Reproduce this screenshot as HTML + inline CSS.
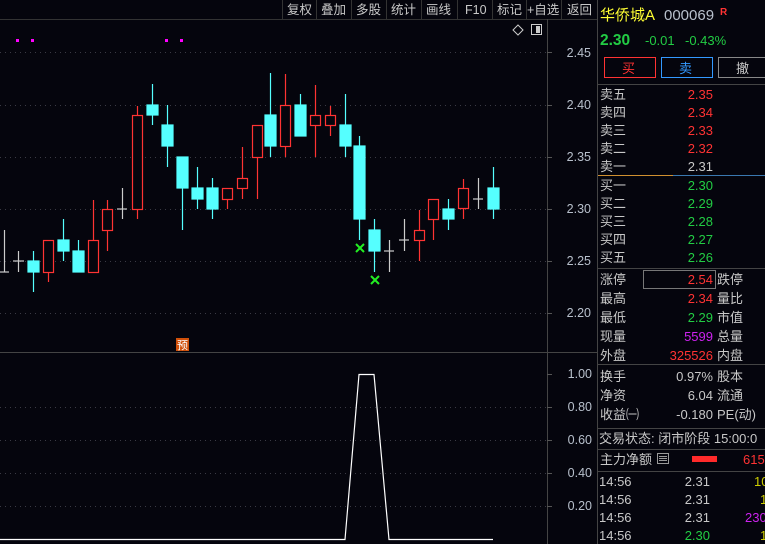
<!DOCTYPE html>
<html><head><meta charset="utf-8"><style>
html,body{margin:0;padding:0;background:#05050d;}
svg{display:block;font-family:"Liberation Sans","Noto Sans CJK SC",sans-serif;}
</style></head><body>
<svg width="765" height="544" viewBox="0 0 765 544" xmlns="http://www.w3.org/2000/svg">
<rect width="765" height="544" fill="#05050d"/>
<!-- toolbar -->
<g stroke="#333" stroke-width="1">
<line x1="282.5" y1="0" x2="282.5" y2="19"/><line x1="316.5" y1="0" x2="316.5" y2="19"/><line x1="351.5" y1="0" x2="351.5" y2="19"/><line x1="386.5" y1="0" x2="386.5" y2="19"/><line x1="421.5" y1="0" x2="421.5" y2="19"/><line x1="457.5" y1="0" x2="457.5" y2="19"/><line x1="492.5" y1="0" x2="492.5" y2="19"/><line x1="526.5" y1="0" x2="526.5" y2="19"/><line x1="561.5" y1="0" x2="561.5" y2="19"/>
<line x1="0" y1="19.5" x2="597" y2="19.5"/>
</g>
<g fill="#c8c8c8" font-size="12.5">
<text x="287" y="14">复权</text><text x="321" y="14">叠加</text><text x="356" y="14">多股</text><text x="391" y="14">统计</text><text x="426" y="14">画线</text><text x="465" y="14">F10</text><text x="497" y="14">标记</text><text x="527" y="14">+自选</text><text x="567" y="14">返回</text>
</g>
<path d="M518 25 L523 30 L518 35 L513 30 Z" fill="none" stroke="#ccc"/>
<rect x="531.5" y="24.5" width="10" height="10" fill="none" stroke="#ccc"/><rect x="536" y="26" width="4" height="7" fill="#ccc"/>
<!-- magenta dots -->
<g fill="#ff00ff"><rect x="16" y="39" width="3" height="3"/><rect x="31" y="39" width="3" height="3"/><rect x="165" y="39" width="3" height="3"/><rect x="180" y="39" width="3" height="3"/></g>
<!-- grids -->
<g stroke="#3a3a44" stroke-dasharray="1 4">
<line x1="0" y1="52.5" x2="547" y2="52.5"/><line x1="0" y1="105.5" x2="547" y2="105.5"/><line x1="0" y1="157.5" x2="547" y2="157.5"/><line x1="0" y1="209.5" x2="547" y2="209.5"/><line x1="0" y1="261.5" x2="547" y2="261.5"/><line x1="0" y1="313.5" x2="547" y2="313.5"/>
<line x1="0" y1="407.5" x2="547" y2="407.5"/><line x1="0" y1="440.5" x2="547" y2="440.5"/><line x1="0" y1="473.5" x2="547" y2="473.5"/><line x1="0" y1="506.5" x2="547" y2="506.5"/>
</g>
<g stroke="#444"><line x1="547.5" y1="19" x2="547.5" y2="544"/><line x1="597.5" y1="0" x2="597.5" y2="544"/><line x1="0" y1="352.5" x2="597" y2="352.5"/></g>
<g stroke="#555"><line x1="547" y1="52.5" x2="552" y2="52.5"/><line x1="547" y1="105.5" x2="552" y2="105.5"/><line x1="547" y1="157.5" x2="552" y2="157.5"/><line x1="547" y1="209.5" x2="552" y2="209.5"/><line x1="547" y1="261.5" x2="552" y2="261.5"/><line x1="547" y1="313.5" x2="552" y2="313.5"/>
<line x1="547" y1="374.5" x2="552" y2="374.5"/><line x1="547" y1="407.5" x2="552" y2="407.5"/><line x1="547" y1="440.5" x2="552" y2="440.5"/><line x1="547" y1="473.5" x2="552" y2="473.5"/><line x1="547" y1="506.5" x2="552" y2="506.5"/></g>
<g fill="#b8c0cc" font-size="12.5" text-anchor="end">
<text x="591" y="57">2.45</text><text x="591" y="109">2.40</text><text x="591" y="161">2.35</text><text x="591" y="213">2.30</text><text x="591" y="265">2.25</text><text x="591" y="317">2.20</text>
<text x="592" y="378">1.00</text><text x="592" y="411">0.80</text><text x="592" y="444">0.60</text><text x="592" y="477">0.40</text><text x="592" y="510">0.20</text>
</g>
<!-- candles -->
<g stroke-width="1.2">
<!-- gray -->
<g stroke="#cccccc">
<line x1="4.5" y1="230" x2="4.5" y2="272"/><line x1="0" y1="272" x2="9" y2="272"/>
<line x1="18.5" y1="251" x2="18.5" y2="272"/><line x1="13" y1="261" x2="24" y2="261"/>
<line x1="122.5" y1="188" x2="122.5" y2="219"/><line x1="117" y1="209" x2="127" y2="209"/>
<line x1="389.5" y1="240" x2="389.5" y2="272"/><line x1="384" y1="251" x2="394" y2="251"/>
<line x1="404.5" y1="219" x2="404.5" y2="251"/><line x1="399" y1="240" x2="409" y2="240"/>
<line x1="478.5" y1="178" x2="478.5" y2="209"/><line x1="473" y1="199" x2="483" y2="199"/>
</g>
<!-- cyan -->
<g stroke="#55ffff" fill="#55ffff">
<line x1="33.5" y1="251" x2="33.5" y2="292"/><rect x="28" y="261" width="11" height="11"/>
<line x1="63.5" y1="219" x2="63.5" y2="261"/><rect x="58" y="240" width="11" height="11"/>
<line x1="78.5" y1="240" x2="78.5" y2="272"/><rect x="73" y="251" width="11" height="21"/>
<line x1="152.5" y1="84" x2="152.5" y2="125"/><rect x="147" y="105" width="11" height="10"/>
<line x1="167.5" y1="105" x2="167.5" y2="167"/><rect x="162" y="125" width="11" height="21"/>
<line x1="182.5" y1="157" x2="182.5" y2="230"/><rect x="177" y="157" width="11" height="31"/>
<line x1="197.5" y1="167" x2="197.5" y2="209"/><rect x="192" y="188" width="11" height="11"/>
<line x1="212.5" y1="178" x2="212.5" y2="219"/><rect x="207" y="188" width="11" height="21"/>
<line x1="270.5" y1="73" x2="270.5" y2="157"/><rect x="265" y="115" width="11" height="31"/>
<line x1="300.5" y1="94" x2="300.5" y2="136"/><rect x="295" y="105" width="11" height="31"/>
<line x1="345.5" y1="94" x2="345.5" y2="157"/><rect x="340" y="125" width="11" height="21"/>
<line x1="359.5" y1="136" x2="359.5" y2="240"/><rect x="354" y="146" width="11" height="73"/>
<line x1="374.5" y1="219" x2="374.5" y2="272"/><rect x="369" y="230" width="11" height="21"/>
<line x1="448.5" y1="199" x2="448.5" y2="230"/><rect x="443" y="209" width="11" height="10"/>
<line x1="493.5" y1="167" x2="493.5" y2="219"/><rect x="488" y="188" width="11" height="21"/>
</g>
<!-- red -->
<g stroke="#ff3333" fill="#05050d">
<line x1="48.5" y1="240" x2="48.5" y2="282"/><rect x="43.5" y="240.5" width="10" height="32"/>
<line x1="93.5" y1="200" x2="93.5" y2="272"/><rect x="88.5" y="240.5" width="10" height="32"/>
<line x1="107.5" y1="200" x2="107.5" y2="251"/><rect x="102.5" y="209.5" width="10" height="21"/>
<line x1="137.5" y1="106" x2="137.5" y2="219"/><rect x="132.5" y="115.5" width="10" height="94"/>
<line x1="227.5" y1="188" x2="227.5" y2="209"/><rect x="222.5" y="188.5" width="10" height="11"/>
<line x1="242.5" y1="147" x2="242.5" y2="199"/><rect x="237.5" y="178.5" width="10" height="10"/>
<line x1="257.5" y1="125" x2="257.5" y2="199"/><rect x="252.5" y="125.5" width="10" height="32"/>
<line x1="285.5" y1="74" x2="285.5" y2="157"/><rect x="280.5" y="105.5" width="10" height="41"/>
<line x1="315.5" y1="85" x2="315.5" y2="157"/><rect x="310.5" y="115.5" width="10" height="10"/>
<line x1="330.5" y1="106" x2="330.5" y2="136"/><rect x="325.5" y="115.5" width="10" height="10"/>
<line x1="419.5" y1="210" x2="419.5" y2="261"/><rect x="414.5" y="230.5" width="10" height="10"/>
<line x1="433.5" y1="199" x2="433.5" y2="240"/><rect x="428.5" y="199.5" width="10" height="20"/>
<line x1="463.5" y1="179" x2="463.5" y2="219"/><rect x="458.5" y="188.5" width="10" height="20"/>
</g>
</g>
<g stroke="#22ee22" stroke-width="2"><path d="M356 244 L364 252 M364 244 L356 252"/><path d="M371 276 L379 284 M379 276 L371 284"/></g>
<rect x="176" y="338" width="13" height="13" fill="#d0500a"/><text x="177" y="349" font-size="11" fill="#fff">预</text>
<!-- indicator -->
<polyline points="0,539.5 345,539.5 359,374.5 374,374.5 389,539.5 493,539.5" fill="none" stroke="#fff" stroke-width="1.2"/>
<!-- right panel -->
<text x="600" y="20" font-size="15" fill="#ffff33">华侨城A</text>
<text x="664" y="20" font-size="15" fill="#b8c0cc">000069</text>
<text x="720" y="15" font-size="10" fill="#ff3333" font-weight="bold">R</text>
<text x="600" y="45" font-size="15.5" fill="#22cc44" font-weight="bold">2.30</text>
<text x="645" y="45" font-size="13" fill="#22cc44">-0.01</text>
<text x="685" y="45" font-size="13" fill="#22cc44">-0.43%</text>
<rect x="604.5" y="57.5" width="51" height="20" fill="none" stroke="#ff3333"/><text x="622" y="73" font-size="13" fill="#ff3333">买</text>
<rect x="661.5" y="57.5" width="51" height="20" fill="none" stroke="#3399ff"/><text x="679" y="73" font-size="13" fill="#3399ff">卖</text>
<rect x="718.5" y="57.5" width="51" height="20" fill="none" stroke="#888"/><text x="736" y="73" font-size="13" fill="#ccc">撤</text>
<g stroke="#444"><line x1="597" y1="84.5" x2="765" y2="84.5"/><line x1="597" y1="268.5" x2="765" y2="268.5"/><line x1="597" y1="364.5" x2="765" y2="364.5"/><line x1="597" y1="428.5" x2="765" y2="428.5"/><line x1="597" y1="449.5" x2="765" y2="449.5"/><line x1="597" y1="471.5" x2="765" y2="471.5"/></g>
<line x1="598" y1="175.5" x2="673" y2="175.5" stroke="#d09030"/><line x1="673" y1="175.5" x2="765" y2="175.5" stroke="#3a78b0"/>
<g font-size="13" fill="#c8c8c8">
<text x="600" y="99">卖五</text><text x="600" y="117">卖四</text><text x="600" y="135">卖三</text><text x="600" y="153">卖二</text><text x="600" y="171">卖一</text>
<text x="600" y="190">买一</text><text x="600" y="208">买二</text><text x="600" y="226">买三</text><text x="600" y="244">买四</text><text x="600" y="262">买五</text>
<text x="600" y="284">涨停</text><text x="600" y="303">最高</text><text x="600" y="322">最低</text><text x="600" y="341">现量</text><text x="600" y="360">外盘</text>
<text x="717" y="284">跌停</text><text x="717" y="303">量比</text><text x="717" y="322">市值</text><text x="717" y="341">总量</text><text x="717" y="360">内盘</text>
<text x="600" y="381">换手</text><text x="600" y="400">净资</text><text x="600" y="419">收益㈠</text>
<text x="717" y="381">股本</text><text x="717" y="400">流通</text><text x="717" y="419">PE(动)</text>
<text x="599" y="443">交易状态: 闭市阶段 15:00:0</text>
<text x="600" y="464">主力净额</text>
</g>
<rect x="657.5" y="453.5" width="11" height="10" fill="none" stroke="#999"/><g stroke="#999"><line x1="659" y1="456.5" x2="667" y2="456.5"/><line x1="659" y1="458.5" x2="667" y2="458.5"/><line x1="659" y1="460.5" x2="667" y2="460.5"/></g>
<rect x="692" y="456" width="25" height="6" fill="#ff2a2a"/>
<text x="743" y="464" font-size="13" fill="#ff3333">615</text>
<g font-size="13" text-anchor="end">
<text x="713" y="99" fill="#ff3333">2.35</text><text x="713" y="117" fill="#ff3333">2.34</text><text x="713" y="135" fill="#ff3333">2.33</text><text x="713" y="153" fill="#ff3333">2.32</text><text x="713" y="171" fill="#c8c8c8">2.31</text>
<text x="713" y="190" fill="#22cc44">2.30</text><text x="713" y="208" fill="#22cc44">2.29</text><text x="713" y="226" fill="#22cc44">2.28</text><text x="713" y="244" fill="#22cc44">2.27</text><text x="713" y="262" fill="#22cc44">2.26</text>
<text x="713" y="284" fill="#ff3333">2.54</text><text x="713" y="303" fill="#ff3333">2.34</text><text x="713" y="322" fill="#22cc44">2.29</text><text x="713" y="341" fill="#cc22ee">5599</text><text x="713" y="360" fill="#ff3333">325526</text>
<text x="713" y="381" fill="#c8c8c8">0.97%</text><text x="713" y="400" fill="#c8c8c8">6.04</text><text x="713" y="419" fill="#c8c8c8">-0.180</text>
<text x="710" y="486" fill="#c8c8c8">2.31</text><text x="710" y="504" fill="#c8c8c8">2.31</text><text x="710" y="522" fill="#c8c8c8">2.31</text><text x="710" y="540" fill="#22cc44">2.30</text>
</g>
<rect x="643.5" y="270.5" width="72" height="18" fill="none" stroke="#777"/>
<g font-size="13" fill="#c8c8c8"><text x="599" y="486">14:56</text><text x="599" y="504">14:56</text><text x="599" y="522">14:56</text><text x="599" y="540">14:56</text></g>
<g font-size="13"><text x="754" y="486" fill="#cccc00">10</text><text x="760" y="504" fill="#cccc00">1</text><text x="745" y="522" fill="#cc22ee">230</text><text x="760" y="540" fill="#cccc00">1</text></g>
</svg>
</body></html>
